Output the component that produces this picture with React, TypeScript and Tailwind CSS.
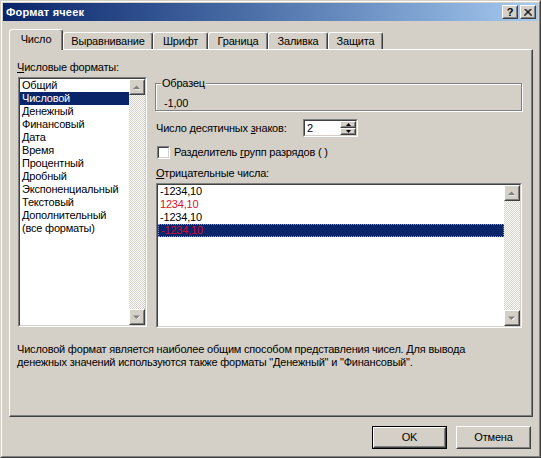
import React from "react";

const leftItems = [
  "Общий",
  "Числовой",
  "Денежный",
  "Финансовый",
  "Дата",
  "Время",
  "Процентный",
  "Дробный",
  "Экспоненциальный",
  "Текстовый",
  "Дополнительный",
  "(все форматы)",
];

const negItems = [
  { text: "-1234,10", red: false },
  { text: "1234,10", red: true },
  { text: "-1234,10", red: false },
  { text: "-1234,10", red: true },
];

const tabs = [
  { label: "Выравнивание", w: "w-[90px]" },
  { label: "Шрифт", w: "w-[55px]" },
  { label: "Граница", w: "w-[60px]" },
  { label: "Заливка", w: "w-[60px]" },
  { label: "Защита", w: "w-[55px]" },
];

// classic 3d raised frame
const Raised = ({ className, children }: { className: string; children?: React.ReactNode }) => (
  <div className={`border border-t-white border-l-white border-r-[#404040] border-b-[#404040] ${className}`}>
    <div className="flex h-full w-full items-center justify-center border border-t-[#d4d0c8] border-l-[#d4d0c8] border-r-[#808080] border-b-[#808080] bg-[#d4d0c8]">
      {children}
    </div>
  </div>
);

const Sunken = ({ className, children }: { className: string; children?: React.ReactNode }) => (
  <div className={`border border-t-[#808080] border-l-[#808080] border-r-white border-b-white ${className}`}>
    <div className="flex h-full w-full border border-t-[#404040] border-l-[#404040] border-r-[#d4d0c8] border-b-[#d4d0c8] bg-white">
      {children}
    </div>
  </div>
);

const Arrow = ({ up, disabled }: { up: boolean; disabled?: boolean }) => (
  <svg width="8" height="5" viewBox="0 0 8 5">
    {disabled && (
      <polygon points={up ? "1.5,4.5 4.5,1.5 7.5,4.5" : "1.5,1.5 7.5,1.5 4.5,4.5"} fill="#ffffff" />
    )}
    <polygon
      points={up ? "0,4 3.5,0.5 7,4" : "0,0.5 7,0.5 3.5,4"}
      fill={disabled ? "#808080" : "#000000"}
    />
  </svg>
);

const ScrollBar = () => (
  <div className="flex w-[16px] flex-col self-stretch">
    <Raised className="h-[16px] w-[16px]">
      <Arrow up disabled />
    </Raised>
    <div className="flex-1 bg-[repeating-conic-gradient(#ffffff_0_25%,#d4d0c8_0_50%)] bg-[length:2px_2px]" />
    <Raised className="h-[16px] w-[16px]">
      <Arrow up={false} disabled />
    </Raised>
  </div>
);

export default function App() {
  return (
    <div className="h-[458px] w-[541px] border border-t-[#d4d0c8] border-l-[#d4d0c8] border-r-[#404040] border-b-[#404040] bg-[#d4d0c8] text-[11px] leading-[13px] text-black [font-family:'Liberation_Sans',Arial,sans-serif]">
      <div className="h-full w-full border border-t-white border-l-white border-r-[#808080] border-b-[#808080] p-[1px]">
        {/* title bar */}
        <div className="flex h-[18px] items-center bg-linear-to-r from-[#0a246a] to-[#a6caf0] pl-[3px] pr-[2px]">
          <span className="font-bold tracking-[0.2px] text-white">Формат ячеек</span>
          <div className="ml-auto flex gap-[2px]">
            <Raised className="h-[14px] w-[16px]">
              <span className="text-[11px] font-bold leading-[10px]">?</span>
            </Raised>
            <Raised className="h-[14px] w-[16px]">
              <svg width="8" height="7" viewBox="0 0 8 7">
                <path d="M0.5 0 L7.5 7 M1.5 0 L8 6.5 M7.5 0 L0.5 7 M6.5 0 L0 6.5" stroke="#000" strokeWidth="1" />
              </svg>
            </Raised>
          </div>
        </div>

        <div className="tracking-[-0.2px]">
          {/* tabs */}
          <div className="ml-[6px] mt-[8px] flex h-[20px] items-end">
            <div className="relative z-10 -mb-[1px] flex h-[21px] w-[54px] items-start justify-center rounded-t-[3px] border-l border-t border-r border-l-white border-t-white border-r-[#404040] bg-[#d4d0c8] pt-[3px] shadow-[inset_-1px_0_0_#808080]">
              Число
            </div>
            {tabs.map((t) => (
              <div
                key={t.label}
                className={`flex h-[17px] items-center justify-center rounded-t-[3px] border-l border-t border-r border-l-white border-t-white border-r-[#404040] shadow-[inset_-1px_0_0_#808080] ${t.w}`}
              >
                {t.label}
              </div>
            ))}
          </div>

          {/* panel */}
          <div className="ml-[6px] h-[368px] w-[524px] border border-t-white border-l-white border-r-[#404040] border-b-[#404040] shadow-[inset_-1px_-1px_0_#808080]">
            <div className="flex">
              <div className="ml-[7px] w-[130px]">
                <div className="mt-[11px] h-[13px]">
                  <span className="underline">Ч</span>исловые форматы:
                </div>
                <Sunken className="ml-[1px] mt-[3px] h-[250px] w-[129px]">
                  <div className="flex-1">
                    {leftItems.map((it, i) => (
                      <div
                        key={it}
                        className={`h-[13px] pl-[2px] ${i === 1 ? "bg-[#0a246a] text-white" : ""}`}
                      >
                        {it}
                      </div>
                    ))}
                  </div>
                  <ScrollBar />
                </Sunken>
              </div>

              <div className="ml-[8px] w-[367px]">
                <div className="relative mt-[33px] h-[28px] border border-[#808080] pl-[8px] pt-[13px] shadow-[inset_1px_1px_0_#ffffff,1px_1px_0_#ffffff]">
                  <span className="absolute -top-[7px] left-[5px] bg-[#d4d0c8] px-[1px]">Образец</span>
                  -1,00
                </div>

                <div className="mt-[8px] flex h-[18px] items-center">
                  <div className="ml-[1px] w-[147px]">
                    Число десятичных <span className="underline">з</span>наков:
                  </div>
                  <Sunken className="h-[18px] w-[55px]">
                    <div className="flex-1 pl-[2px] leading-[14px]">2</div>
                    <div className="flex flex-col">
                      <Raised className="h-[7px] w-[16px]">
                        <svg width="5" height="3" viewBox="0 0 5 3">
                          <polygon points="0,3 2.5,0 5,3" fill="#000" />
                        </svg>
                      </Raised>
                      <Raised className="h-[7px] w-[16px]">
                        <svg width="5" height="3" viewBox="0 0 5 3">
                          <polygon points="0,0 5,0 2.5,3" fill="#000" />
                        </svg>
                      </Raised>
                    </div>
                  </Sunken>
                </div>

                <div className="mt-[9px] flex h-[13px] items-center">
                  <Sunken className="ml-[2px] h-[13px] w-[13px]" />
                  <span className="ml-[4px]">
                    Разделитель <span className="underline">г</span>рупп разрядов ( )
                  </span>
                </div>

                <div className="ml-[1px] mt-[8px] h-[13px]">
                  <span className="underline">О</span>трицательные числа:
                </div>

                <Sunken className="ml-[1px] mt-[3px] h-[145px] w-[366px]">
                  <div className="flex-1">
                    {negItems.map((it, i) => (
                      <div
                        key={i}
                        className={`h-[13px] pl-[2px] ${
                          i === 3
                            ? "border border-dotted border-[#8a96c0] bg-[#0a246a] pl-[1px] leading-[11px] text-[#d0102a]"
                            : it.red
                              ? "text-[#d8102a]"
                              : ""
                        }`}
                      >
                        {it.text}
                      </div>
                    ))}
                  </div>
                  <ScrollBar />
                </Sunken>
              </div>
            </div>

            <div className="ml-[7px] mt-[15px]">
              <div>
                Числовой формат является наиболее общим способом представления чисел. Для вывода
              </div>
              <div>денежных значений используются также форматы "Денежный" и "Финансовый".</div>
            </div>
          </div>

          {/* buttons */}
          <div className="mr-[7px] mt-[9px] flex justify-end gap-[9px]">
            <div className="border border-black">
              <Raised className="h-[21px] w-[73px]">OK</Raised>
            </div>
            <Raised className="h-[23px] w-[75px]">Отмена</Raised>
          </div>
        </div>
      </div>
    </div>
  );
}
